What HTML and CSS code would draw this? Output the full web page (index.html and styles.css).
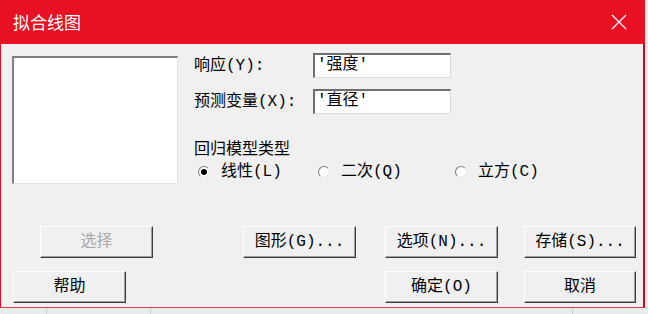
FILE: index.html
```html
<!DOCTYPE html>
<html>
  <head>
    <meta charset="UTF-8">
    <title>拟合线图</title>
    <link rel="stylesheet" href="styles.css">
  </head>
  <body>
    <div class="dialog">
      <div class="titlebar">
        <span class="title">拟合线图</span>
        <svg class="close" width="16" height="16" viewBox="0 0 16 16">
          <path d="M1 1 L15 15 M15 1 L1 15" stroke="#fff" stroke-width="1.2" fill="none"/>
        </svg>
      </div>
      <div class="content">
        <div class="top">
          <div class="listbox"></div>
          <div class="fields">
            <div class="field">
              <span class="label">响应(Y):</span>
              <div class="textbox">'强度'</div>
            </div>
            <div class="field second">
              <span class="label">预测变量(X):</span>
              <div class="textbox">'直径'</div>
            </div>
            <div class="group-title">回归模型类型</div>
            <div class="radios">
              <div class="radio checked"><span class="dot"></span>线性(L)</div>
              <div class="radio"><span class="dot"></span>二次(Q)</div>
              <div class="radio"><span class="dot"></span>立方(C)</div>
            </div>
          </div>
        </div>
        <div class="btnrow row1">
          <button class="disabled b-select">选择</button>
          <button class="b-graph">图形(G)...</button>
          <button class="b-opts">选项(N)...</button>
          <button class="b-store">存储(S)...</button>
        </div>
        <div class="btnrow row2">
          <button class="b-help">帮助</button>
          <button class="b-ok">确定(O)</button>
          <button class="b-cancel">取消</button>
        </div>
      </div>
    </div>
    <div class="desk"></div>
  </body>
</html>
```
FILE: styles.css
```css
body {
  margin: 0;
  width: 648px;
  height: 314px;
  overflow: hidden;
  background-color: #e8ecea;
  font-family: "Liberation Mono", "Noto Sans CJK SC", monospace;
  font-size: 16px;
  color: #000;
}
.dialog {
  width: 642px;
  border-left: 1px solid #e81123;
  border-right: 2px solid #c0101e;
  border-bottom: 1px solid #e0404f;
  background-color: #f0f0f0;
}
.titlebar {
  height: 44px;
  background-color: #e81123;
  display: flex;
  align-items: center;
  justify-content: space-between;
  padding: 0 18px 0 12px;
  margin-right: -2px;
}
.title {
  font-family: "Noto Sans CJK SC", sans-serif;
  color: #fff;
  font-size: 17px;
  line-height: 20px;
}
.close {
  display: block;
}
.content {
  padding: 9px 0 4px 11px;
}
.top {
  display: flex;
  height: 131px;
}
.listbox {
  width: 166px;
  height: 126px;
  margin-top: 3px;
  background-color: #fff;
  border-top: 2px solid #808080;
  border-left: 2px solid #808080;
  border-right: 1px solid #e3e3e3;
  border-bottom: 1px solid #e3e3e3;
  box-sizing: border-box;
  height: 128px;
}
.fields {
  margin-left: 16px;
  flex: 1;
}
.field {
  display: flex;
  align-items: center;
  height: 25px;
}
.field.second {
  margin-top: 11px;
}
.label {
  width: 119px;
  line-height: 18px;
}
.textbox {
  width: 138px;
  height: 25px;
  box-sizing: border-box;
  background-color: #fff;
  border-top: 2px solid #6e6e6e;
  border-left: 2px solid #6e6e6e;
  border-right: 1px solid #dcdcdc;
  border-bottom: 1px solid #dcdcdc;
  padding-left: 2px;
  line-height: 21px;
}
.group-title {
  margin-top: 27px;
  line-height: 18px;
}
.radios {
  display: grid;
  grid-template-columns: 120px 137px 120px;
  margin-top: 4px;
  padding-left: 4px;
  line-height: 18px;
}
.radio {
  display: flex;
  align-items: center;
}
.dot {
  width: 12px;
  height: 12px;
  box-sizing: border-box;
  border-radius: 50%;
  background-color: #fff;
  border: 1px solid;
  border-color: #7a7a7a #e6e6e6 #e6e6e6 #7a7a7a;
  margin-right: 11px;
  position: relative;
}
.radio.checked .dot::after {
  content: "";
  position: absolute;
  left: 2px;
  top: 2px;
  width: 6px;
  height: 6px;
  border-radius: 50%;
  background-color: #000;
}
.btnrow {
  display: flex;
}
.row1 {
  margin-top: 42px;
}
.row2 {
  margin-top: 13px;
}
button {
  width: 113px;
  height: 32px;
  font-family: "Liberation Mono", "Noto Sans CJK SC", monospace;
  font-size: 16px;
  color: #000;
  background-color: #f0f0f0;
  border: 1px solid;
  border-color: #fff #3c3c3c #3c3c3c #fff;
  box-shadow: inset -1px -1px 0 #a0a0a0;
  padding: 0;
  line-height: 18px;
}
button.disabled {
  color: #a8a8a8;
}
.b-select {
  margin-left: 28px;
}
.b-graph {
  margin-left: 90px;
}
.b-opts {
  margin-left: 29px;
}
.b-store {
  margin-left: 26px;
  width: 112px;
}
.b-help {
  margin-left: 1px;
}
.b-ok {
  margin-left: 259px;
}
.b-cancel {
  margin-left: 26px;
  width: 112px;
}
.desk {
  height: 6px;
  background-image: linear-gradient(90deg, transparent 46px, #c8ccca 46px, #c8ccca 47px, transparent 47px, transparent 150px, #c8ccca 150px, #c8ccca 151px, transparent 151px, transparent 572px, #c8ccca 572px, #c8ccca 573px, transparent 573px);
}
```
